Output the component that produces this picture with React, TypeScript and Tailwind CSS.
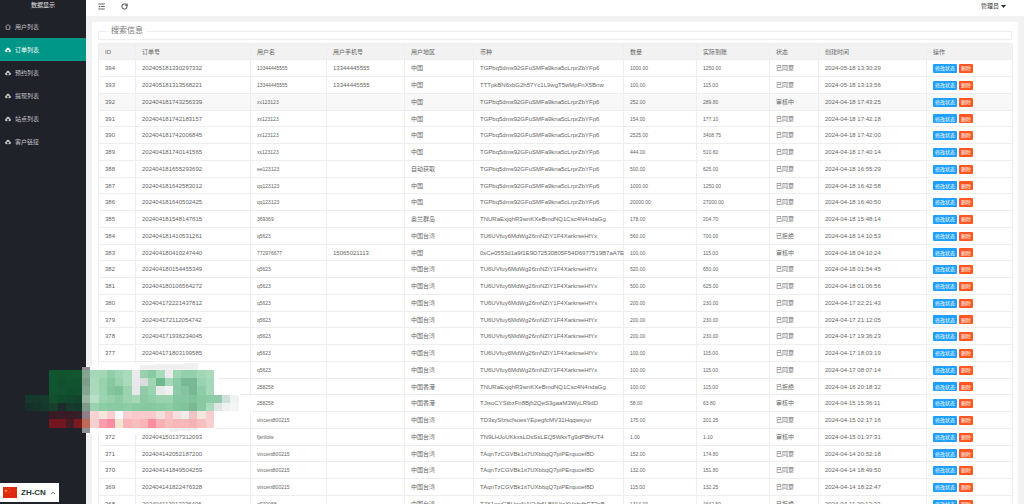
import { useState } from 'react';
import { ChevronUp, RotateCw } from 'lucide-react';
import clsx from 'clsx';

interface Order {
  id: string;
  no: string;
  user: string;
  phone?: string;
  region: string;
  coin: string;
  amount: string;
  received: string;
  status: string;
  created: string;
}

const GP = 'TGPbq5dms92GFuSMFa9kna5cLrprZbYFp6';
const TU = 'TU6UVfuy6MdWg26mNZiY1F4XarkrseHfYx';
const TN = 'TNURaExjqhR3wnKXeBmdNQ1Csc4N4ndaGg';
const TA = 'TAqnTzCGVBk1it7UXbbqQ7piPErquoef8D';

const orders: Order[] = [
  { id: '394', no: '202405181330297332', user: '13344445555', phone: '13344445555', region: '中国', coin: GP, amount: '1000.00', received: '1250.00', status: '已同意', created: '2024-05-18 13:30:29' },
  { id: '393', no: '202405181313568221', user: '13344445555', phone: '13344445555', region: '中国', coin: 'TTTpkBN6xbG2h57Yc1L9wgT5wMpFnX5Bnw', amount: '100.00', received: '115.00', status: '已同意', created: '2024-05-18 13:13:56' },
  { id: '392', no: '202404181743256339', user: 'xx123123', region: '中国', coin: GP, amount: '252.00', received: '289.80', status: '审核中', created: '2024-04-18 17:43:25' },
  { id: '391', no: '202404181742183157', user: 'xx123123', region: '中国', coin: GP, amount: '154.00', received: '177.10', status: '已同意', created: '2024-04-18 17:42:18' },
  { id: '390', no: '202404181742006845', user: 'xx123123', region: '中国', coin: GP, amount: '2525.00', received: '3408.75', status: '已同意', created: '2024-04-18 17:42:00' },
  { id: '389', no: '202404181740141565', user: 'xx123123', region: '中国', coin: GP, amount: '444.00', received: '510.60', status: '已同意', created: '2024-04-18 17:40:14' },
  { id: '388', no: '202404181655293692', user: 'ee123123', region: '自动获取', coin: GP, amount: '500.00', received: '625.00', status: '已同意', created: '2024-04-18 16:55:29' },
  { id: '387', no: '202404181642583012', user: 'qq123123', region: '中国', coin: GP, amount: '1000.00', received: '1250.00', status: '已同意', created: '2024-04-18 16:42:58' },
  { id: '386', no: '202404181640502425', user: 'qq123123', region: '中国', coin: GP, amount: '20000.00', received: '27000.00', status: '已同意', created: '2024-04-18 16:40:50' },
  { id: '385', no: '202404181548147615', user: '369369', region: '奥兰群岛', coin: TN, amount: '178.00', received: '204.70', status: '已同意', created: '2024-04-18 15:48:14' },
  { id: '384', no: '202404181410531261', user: 'q5623', region: '中国台湾', coin: TU, amount: '560.00', received: '700.00', status: '已拒绝', created: '2024-04-18 14:10:53' },
  { id: '383', no: '202404180410247440', user: '772976677', phone: '15065021113', region: '中国', coin: '0xCe0553d1a9f1E9D72530805F54D6977519B7aA7E', amount: '100.00', received: '115.00', status: '审核中', created: '2024-04-18 04:10:24' },
  { id: '382', no: '202404180154455349', user: 'q5623', region: '中国台湾', coin: TU, amount: '520.00', received: '650.00', status: '已同意', created: '2024-04-18 01:54:45' },
  { id: '381', no: '202404180106564272', user: 'q5623', region: '中国台湾', coin: TU, amount: '500.00', received: '625.00', status: '已同意', created: '2024-04-18 01:06:56' },
  { id: '380', no: '202404172221437812', user: 'q5623', region: '中国台湾', coin: TU, amount: '200.00', received: '230.00', status: '已同意', created: '2024-04-17 22:21:43' },
  { id: '379', no: '202404172112054742', user: 'q5623', region: '中国台湾', coin: TU, amount: '200.00', received: '230.00', status: '已同意', created: '2024-04-17 21:12:05' },
  { id: '378', no: '202404171936234045', user: 'q5623', region: '中国台湾', coin: TU, amount: '200.00', received: '230.00', status: '已同意', created: '2024-04-17 19:36:23' },
  { id: '377', no: '202404171803199585', user: 'q5623', region: '中国台湾', coin: TU, amount: '100.00', received: '115.00', status: '已同意', created: '2024-04-17 18:03:19' },
  { id: '', no: '', user: 'q5623', region: '中国台湾', coin: TU, amount: '100.00', received: '115.00', status: '已同意', created: '2024-04-17 08:07:14' },
  { id: '', no: '', user: '258258', region: '中国香港', coin: TN, amount: '100.00', received: '115.00', status: '已拒绝', created: '2024-04-16 20:18:32' },
  { id: '', no: '', user: '258258', region: '中国香港', coin: 'TJisoCYStbzFn8Bjh2QeS3gaaM3WyLR9dD', amount: '58.00', received: '63.80', status: '审核中', created: '2024-04-15 15:36:11' },
  { id: '', no: '', user: 'vincent800215', region: '中国台湾', coin: 'TD3sySfzscfsoesYEpegfcMV31Hqqwsyur', amount: '175.00', received: '201.25', status: '已同意', created: '2024-04-15 02:17:16' },
  { id: '372', no: '202404150137312093', user: 'fjeriloiw', region: '中国台湾', coin: 'TN9LHJoUKkxsLDxSsLEQ5WkxTg9dPBhUT4', amount: '1.00', received: '1.10', status: '审核中', created: '2024-04-15 01:37:31' },
  { id: '371', no: '202404142052187200', user: 'vincent800215', region: '中国台湾', coin: TA, amount: '152.00', received: '174.80', status: '已同意', created: '2024-04-14 20:52:18' },
  { id: '370', no: '202404141849504259', user: 'vincent800215', region: '中国台湾', coin: TA, amount: '132.00', received: '151.80', status: '已同意', created: '2024-04-14 18:49:50' },
  { id: '369', no: '202404141822476328', user: 'vincent800215', region: '中国台湾', coin: TA, amount: '115.00', received: '132.25', status: '已同意', created: '2024-04-14 18:22:47' },
  { id: '368', no: '202404112012336406', user: 'q920068', region: '中国台湾', coin: 'TJX1mvGBHpxNACVh6LBNUtcXVphdhET3sB', amount: '1314.00', received: '1642.50', status: '已拒绝', created: '2024-04-11 20:12:33' },
];

const menu = ['用户列表', '订单列表', '预约列表', '提现列表', '站点列表', '客户链接'];

const columns = [
  { title: 'ID', width: 'w-[37px]' },
  { title: '订单号', width: 'w-[115px]' },
  { title: '用户名', width: 'w-[76px]' },
  { title: '用户手机号', width: 'w-[78px]' },
  { title: '用户地区', width: 'w-[69px]' },
  { title: '币种', width: 'w-[150px]' },
  { title: '数量', width: 'w-[73px]' },
  { title: '实际到账', width: 'w-[73px]' },
  { title: '状态', width: 'w-[49px]' },
  { title: '创建时间', width: 'w-[108px]' },
  { title: '操作', width: 'w-[86px]' },
];

// Censor blocks, one array per line of cells; `from` is the first column
const mosaic: { from: number; cells: string[] }[] = [
  { from: 0, cells: ['#11552f', '#11532f', '#11552f', '#12562f', '#84a590', '#a5d8b8', '#a3d7b6', '#90cfa8', '#9ed5b3', '#a8dbbb', '#ebebed', '#98d2ad', '#88cba2', '#a8dbbb', '#ebebeb', '#9fd6b4', '#92cfaa', '#94d0ab', '#a3d7b6', '#a8dabb'] },
  { from: 0, cells: ['#11552f', '#11502e', '#11532f', '#12532f', '#809c8b', '#a8dabb', '#98d2ae', '#85c9a0', '#98d2ae', '#a8dabb', '#e9e9eb', '#d8dede', '#a0d6b4', '#6fb98e', '#a5d8b8', '#8ccaa5', '#78b893', '#78b893', '#98d2ae', '#a5d8b8'] },
  { from: 0, cells: ['#11552f', '#125230', '#11502e', '#12502f', '#84a590', '#a8dabb', '#98d2ae', '#84c59e', '#7fc19a', '#98d2ae', '#e8e8ea', '#8fcba8', '#9ad3b0', '#e8eae9', '#eef2f0', '#8ccaa5', '#85c49e', '#78b893', '#8ccca6', '#a5d8b8'] },
  { from: -3, cells: ['#15392c', '#14382b', '#163b2d', '#125030', '#124a2e', '#12482d', '#12452c', '#98b5a2', '#b8e0c8', '#9cd3b1', '#98d0ae', '#8ccba4', '#9cd3b1', '#a5d8b8', '#8ccaa5', '#92ceaa', '#98d2ae', '#98d2ae', '#85c7a0', '#85c7a0', '#80c29b', '#88c9a2', '#8ccca6', '#92c9a9', '#cfe0d8', '#f0f3f2'] },
  { from: -3, cells: ['#15302a', '#163428', '#15392c', '#15402c', '#1c2a2a', '#163a2c', '#153a2b', '#7d9c88', '#98d2ae', '#8ccca6', '#88caa2', '#88caa2', '#8ccca6', '#88caa2', '#85c9a0', '#85c9a0', '#88caa2', '#8ccca6', '#82c69d', '#80c49b', '#78b893', '#88c9a2', '#a8dabb', '#dfe6e4', '#edf1f0', '#f3f6f5'] },
  { from: 0, cells: ['#381b25', '#351c26', '#381b25', '#35202a', '#8d8087', '#f9d3d4', '#f6e6da', '#f8cfd0', '#fafafa', '#f8cfd1', '#f8c8cc', '#f8caca', '#f8c8cc', '#f2dfdb', '#f8c4c6', '#f8dfdf', '#f0ecec', '#eec4c4', '#f3e6da', '#f8cdd0'] },
  { from: 0, cells: ['#74161f', '#74161f', '#451c26', '#7c1820', '#c06a55', '#f7d0d0', '#fa9dab', '#fa8ea0', '#f5e4d0', '#f8b4b6', '#f8bebe', '#f8b4b6', '#f88fa0', '#f8b0b4', '#f8bebe', '#f8b8b8', '#f8b8b8', '#f4b2b2', '#f8bfc0', '#f8d0d2'] },
];

function MosaicPatch() {
  const size = 8.23;
  return (
    <svg
      aria-hidden="true"
      viewBox="24 362 230 74"
      shapeRendering="crispEdges"
      className="absolute left-6 top-[362px] w-[230px] h-[74px] pointer-events-none"
    >
      <path d="M86 366 L140 363 H216 L220 392 L252 396 V412 L220 416 L214 434 H86 Z" fill="#fff" />
      <path d="M140 365 L198 363 V430 L170 432 V429 H140 Z" fill="#f0f0f0" />
      <rect x="82" y="367" width="8" height="66" fill="#918d94" />
      {mosaic.map((row, y) =>
        row.cells.map((fill, x) => (
          <rect
            key={`${y}-${x}`}
            x={49.3 + (row.from + x) * size}
            y={370 + y * size}
            width={size}
            height={size}
            fill={fill}
          />
        ))
      )}
    </svg>
  );
}

function HouseIcon() {
  return (
    <svg viewBox="0 0 12 12" className="w-1.5 h-1.5" fill="none" stroke="currentColor" strokeWidth="1.4" strokeLinejoin="round">
      <path d="M1 5.5 L6 1 L11 5.5 H9.5 V10.8 H2.5 V5.5 Z" />
    </svg>
  );
}

function CloudUploadIcon() {
  return (
    <svg viewBox="0 0 12 12" className="w-1.5 h-1.5" fill="currentColor">
      <path d="M3 10.5 C1.2 10.5 0 9.2 0 7.6 C0 6.1 1 5 2.4 4.8 C2.8 2.8 4.2 1.5 6 1.5 C7.8 1.5 9.2 2.8 9.6 4.8 C11 5 12 6.1 12 7.6 C12 9.2 10.8 10.5 9 10.5 H7.2 V8 H8.6 L6 5 L3.4 8 H4.8 V10.5 Z" />
    </svg>
  );
}

function MenuFoldIcon() {
  return (
    <svg viewBox="0 0 14 14" className="w-[7px] h-[7px]" fill="none" stroke="currentColor" strokeWidth="1.5">
      <path d="M0.5 2 H13.5 M5.5 7 H13.5 M0.5 12 H13.5" />
      <path d="M3.5 5 L0.8 7 L3.5 9 Z" fill="currentColor" stroke="none" />
    </svg>
  );
}

function ChinaFlag() {
  return (
    <svg viewBox="0 0 28 22" className="w-3.5 h-[11px]">
      <rect width="28" height="22" fill="#de2910" />
      <path d="M6 3 L7 6 H10 L7.6 7.8 L8.5 10.8 L6 9 L3.5 10.8 L4.4 7.8 L2 6 H5 Z" fill="#f0932b" />
      <g fill="#f0932b">
        <circle cx="12" cy="3" r="0.8" />
        <circle cx="14" cy="6" r="0.8" />
        <circle cx="14" cy="9" r="0.8" />
        <circle cx="12" cy="12" r="0.8" />
      </g>
    </svg>
  );
}

export default function App() {
  const [active, setActive] = useState('订单列表');

  return (
    <div className="relative flex h-screen overflow-hidden bg-[#f2f2f2] font-['Liberation_Sans','Noto_Sans_CJK_SC',sans-serif] text-[6px] leading-2 text-[#666] antialiased">
      {/* Sidebar */}
      <aside className="w-[86px] shrink-0 bg-[#20222a] text-[#c3c4c7]">
        <h1 className="h-[15px] pb-1 text-center leading-[11px] text-[#e6e6e7]">数据显示</h1>
        <nav>
          {menu.map((item, i) => (
            <a
              key={item}
              href="#"
              onClick={() => setActive(item)}
              className={clsx('flex h-[23px] items-center gap-1 pl-[5px]', item === active && 'bg-[#009688] text-white')}
            >
              {i === 0 ? <HouseIcon /> : <CloudUploadIcon />}
              {item}
            </a>
          ))}
        </nav>
      </aside>

      <div className="flex min-w-0 flex-1 flex-col">
        {/* Top bar */}
        <header className="flex h-4 shrink-0 items-center justify-between bg-white pb-1 pl-3 pr-[18px] text-[#333]">
          <div className="flex items-center gap-4">
            <button type="button" aria-label="收起菜单">
              <MenuFoldIcon />
            </button>
            <button type="button" aria-label="刷新">
              <RotateCw className="w-[7px] h-[7px]" strokeWidth={3} />
            </button>
          </div>
          <button type="button" className="flex items-center gap-0.5">
            管理员
            <svg viewBox="0 0 10 6" className="w-[5px] h-[3px]" fill="currentColor">
              <path d="M0 0 H10 L5 6 Z" />
            </svg>
          </button>
        </header>

        <main className="min-h-0 flex-1 overflow-hidden p-1.5 pb-0">
          <div className="bg-white px-1.5 pt-[3px]">
            <fieldset className="border border-[#eee] pb-0.5">
              <legend className="ml-2 px-1 text-[8px] leading-3 text-[#777]">搜索信息</legend>
            </fieldset>

            <table className="mt-[3px] w-full table-fixed border-collapse border border-[#eee] text-left">
              <thead>
                <tr className="h-4 bg-[#f2f2f2]">
                  {columns.map((col) => (
                    <th key={col.title} className={clsx('border border-[#eee] px-1.5 font-normal', col.width)}>
                      {col.title}
                    </th>
                  ))}
                </tr>
              </thead>
              <tbody className="[&_td]:border [&_td]:border-[#eee] [&_td]:px-1.5 [&_td]:whitespace-nowrap">
                {orders.map((o, i) => (
                  <tr key={i} className={clsx('h-[17px] nth-[4n]:h-4 hover:bg-[#f8f8f8]', o.id === '392' && 'bg-[#f8f8f8]')}>
                    <td>{o.id}</td>
                    <td>{o.no}</td>
                    <td className="text-[5px]">{o.user}</td>
                    <td>{o.phone}</td>
                    <td>{o.region}</td>
                    <td>{o.coin}</td>
                    <td className="text-[5px]">{o.amount}</td>
                    <td className="text-[5px]">{o.received}</td>
                    <td>{o.status}</td>
                    <td>{o.created}</td>
                    <td>
                      <div className="flex gap-0.5 text-[5px] text-white">
                        <button type="button" className="h-[9px] rounded-[1px] bg-[#1e9fff] px-0.5">修改状态</button>
                        <button type="button" className="h-[9px] rounded-[1px] bg-[#ff5722] px-0.5">删除</button>
                      </div>
                    </td>
                  </tr>
                ))}
              </tbody>
            </table>
          </div>
        </main>
      </div>

      <MosaicPatch />

      {/* Language switch */}
      <button
        type="button"
        className="absolute bottom-0.5 left-0 flex h-[19px] items-center gap-1 bg-white px-[3px] text-[8px] font-bold text-[#1f3a35]"
      >
        <ChinaFlag />
        ZH-CN
        <ChevronUp className="w-1.5 h-1.5" strokeWidth={3} />
      </button>
    </div>
  );
}
